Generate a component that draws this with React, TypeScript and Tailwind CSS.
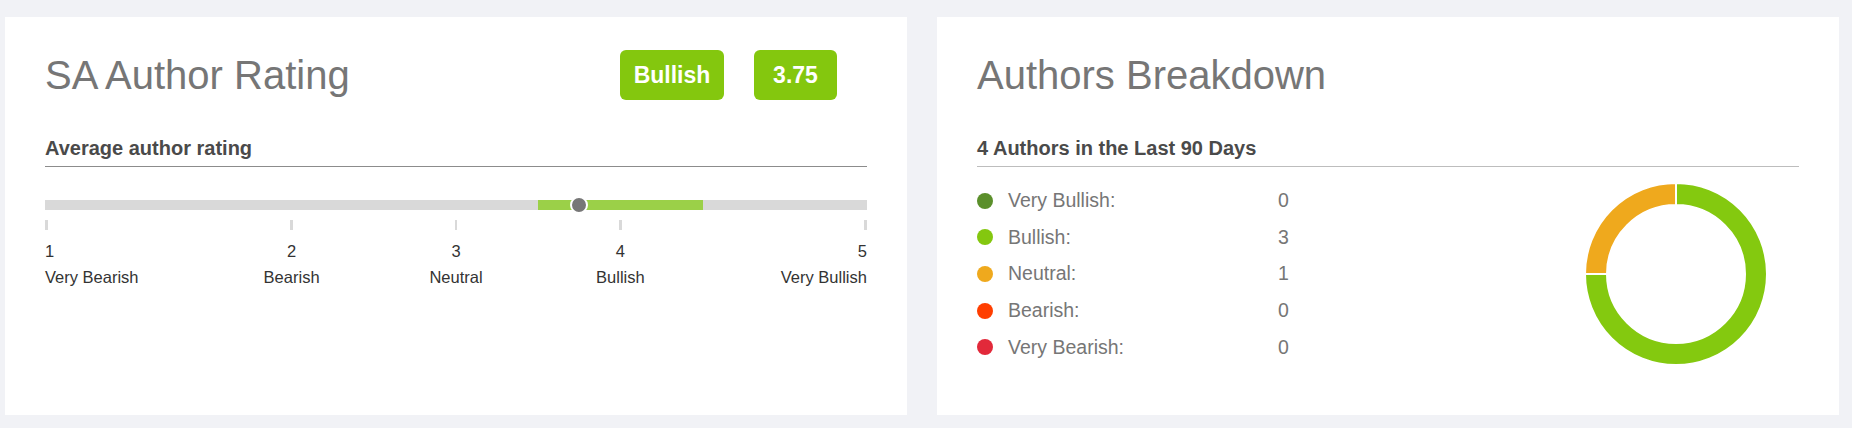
import React from "react";

const font = { fontFamily: '"Liberation Sans", Arial, sans-serif' };

const legend = [
    { label: "Very Bullish:", value: 0, dot: "bg-[#5b8f2b]" },
    { label: "Bullish:", value: 3, dot: "bg-[#84c70f]" },
    { label: "Neutral:", value: 1, dot: "bg-[#efa91d]" },
    { label: "Bearish:", value: 0, dot: "bg-[#ff3e00]" },
    { label: "Very Bearish:", value: 0, dot: "bg-[#e2293a]" },
];

const scale = [
    { n: "1", label: "Very Bearish", align: "justify-self-start text-left" },
    { n: "2", label: "Bearish", align: "justify-self-center text-center" },
    { n: "3", label: "Neutral", align: "justify-self-center text-center" },
    { n: "4", label: "Bullish", align: "justify-self-center text-center" },
    { n: "5", label: "Very Bullish", align: "justify-self-end text-right" },
];

function Donut() {
    return (
        <svg width="184" height="184" viewBox="-1 -1 184 184">
            <path d="M91 0 A91 91 0 1 1 0 91 L22 91 A69 69 0 1 0 91 22 Z" fill="#84c90f" stroke="#fff" strokeWidth="2" />
            <path d="M0 91 A91 91 0 0 1 91 0 L91 22 A69 69 0 0 0 22 91 Z" fill="#efa91d" stroke="#fff" strokeWidth="2" />
        </svg>
    );
}

function Header({ title, children }: { title: string; children?: React.ReactNode }) {
    return (
        <div className="flex items-center justify-between h-[50px]">
            <h2 className="text-[40px] leading-[46px] text-[#767676]">{title}</h2>
            {children}
        </div>
    );
}

function RatingCard() {
    return (
        <div className="bg-white w-[902px] h-[398px] pt-[33px] px-[40px]">
            <Header title="SA Author Rating">
                <div className="flex gap-[30px] mr-[30px]">
                    <span className="w-[104px] h-[50px] rounded-[6px] bg-[#84c70e] text-white font-bold text-[23px] flex items-center justify-center">Bullish</span>
                    <span className="w-[83px] h-[50px] rounded-[6px] bg-[#84c70e] text-white font-bold text-[23px] flex items-center justify-center">3.75</span>
                </div>
            </Header>
            <h4 className="mt-[37px] text-[20px] leading-[23px] font-bold text-[#4a4a4a] pb-[6px] border-b border-[#8c8c8c]">Average author rating</h4>

            {/* track: 1-2 and 4-5 take 30% each, the middle steps 20% */}
            <div className="relative mt-[33px] h-[10px] bg-[#d9d9d9]">
                <div className="absolute top-0 left-[60%] w-[20%] h-full bg-[#9bd048]" />
                <div className="absolute top-1/2 left-[65%] -translate-x-1/2 -translate-y-1/2 w-[18px] h-[18px] rounded-full bg-[#777] border-2 border-white" />
            </div>

            <div className="grid grid-cols-[15%_30%_10%_30%_15%] mt-[10px] h-[10px]">
                {scale.map((s) => (
                    <span key={s.n} className={`w-[2.5px] h-full bg-[#d9d9d9] ${s.align}`} />
                ))}
            </div>
            <div className="grid grid-cols-[15%_30%_10%_30%_15%] mt-[8px] text-[16.5px] leading-[26px] text-[#333]">
                {scale.map((s) => (
                    <div key={s.n} className={`flex flex-col whitespace-nowrap ${s.align}`}>
                        <span>{s.n}</span>
                        <span>{s.label}</span>
                    </div>
                ))}
            </div>
        </div>
    );
}

function BreakdownCard() {
    return (
        <div className="bg-white w-[902px] h-[398px] pt-[33px] px-[40px]">
            <Header title="Authors Breakdown" />
            <h4 className="mt-[37px] text-[20px] leading-[23px] font-bold text-[#4a4a4a] pb-[6px] border-b border-[#bdbdbd]">4 Authors in the Last 90 Days</h4>
            <div className="flex items-center justify-between mt-[15px]">
                <div className="flex flex-col">
                    {legend.map((l) => (
                        <div key={l.label} className="flex items-center h-[36.6px] text-[19.5px] text-[#767676]">
                            <span className={`w-[16px] h-[16px] rounded-full ${l.dot}`} />
                            <span className="ml-[15px] w-[270px]">{l.label}</span>
                            <span>{l.value}</span>
                        </div>
                    ))}
                </div>
                <div className="mr-[31px]">
                    <Donut />
                </div>
            </div>
        </div>
    );
}

export default function App() {
    return (
        <div className="w-[1852px] h-[428px] bg-[#f1f2f6] flex gap-[30px] pt-[17px] pl-[5px]" style={font}>
            <RatingCard />
            <BreakdownCard />
        </div>
    );
}
